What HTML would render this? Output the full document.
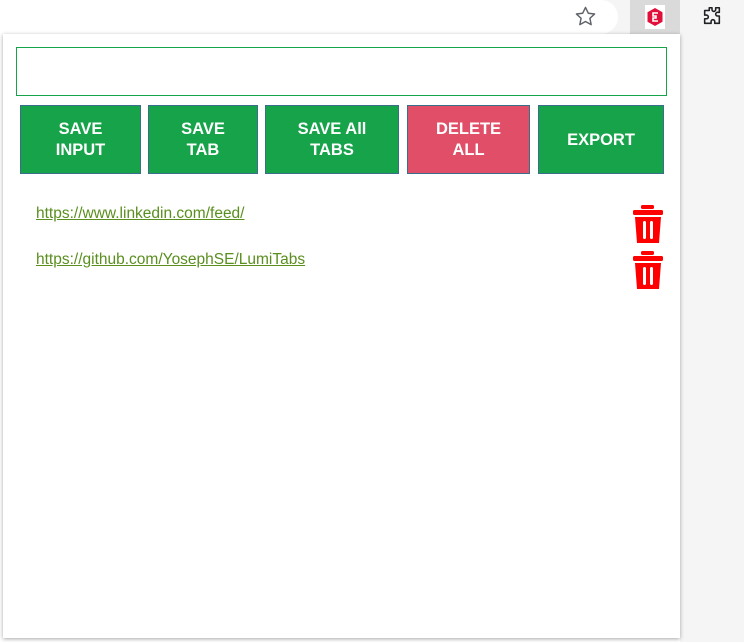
<!DOCTYPE html>
<html><head><meta charset="utf-8"><style>
*{margin:0;padding:0;box-sizing:border-box}
body{width:744px;height:642px;overflow:hidden;background:#fff;font-family:"Liberation Sans",Arial,sans-serif;position:relative}
.top{position:absolute;left:0;top:0;width:744px;height:34px;background:#f5f5f5}
.right{position:absolute;left:680px;top:34px;width:64px;height:608px;background:#f5f5f5}
.bar{position:absolute;left:0;top:0;width:618px;height:34px;background:#fff;border-radius:0 17px 17px 0}
.ext{position:absolute;left:630px;top:0;width:50px;height:34px;background:#dadada}
.popup{position:absolute;left:3px;top:34px;width:677px;height:604px;background:#fff;box-shadow:0 1px 4px rgba(0,0,0,.35)}
.inp{position:absolute;left:13px;top:13px;width:651px;height:49px;border:1px solid #16a34a}
.btn{position:absolute;top:71px;height:69px;background:#16a34a;border:1px solid #3a6e8a;color:#fff;font-weight:bold;font-size:16.5px;line-height:21px;display:flex;align-items:center;justify-content:center;text-align:center;padding-top:1px}
a{position:absolute;left:33px;color:#5a8f1f;font-size:15.5px;text-decoration:underline}
.tr{position:absolute;left:629px}
</style></head><body>
<div class="top"></div>
<div class="bar"></div>
<svg style="position:absolute;left:574px;top:5px" width="23" height="23" viewBox="0 0 24 24"><path d="M12 2.5l2.9 6.1 6.6.8-4.9 4.5 1.3 6.6L12 17.2l-5.9 3.3 1.3-6.6-4.9-4.5 6.6-.8z" fill="none" stroke="#5f6368" stroke-width="1.5" stroke-linejoin="round"/></svg>
<div class="ext"></div>
<svg style="position:absolute;left:645px;top:5px" width="20" height="24" viewBox="0 0 20 24"><rect width="20" height="24" fill="#fff"/><path d="M10 3l7.5 4.2v9.6L10 21l-7.5-4.2V7.2z" fill="#e0103a"/><path d="M13 8H8v3h3v2H8v3h5" fill="none" stroke="#fff" stroke-width="1.6"/></svg>
<svg style="position:absolute;left:701px;top:5px" width="22" height="22" viewBox="0 0 24 24"><path d="M9 3h3v2a2 2 0 0 0 4 0V3h0v0h4v5h-2a2 2 0 0 0 0 4h2v8h-5v-2a2 2 0 0 0-4 0v2H4v-5h2a2 2 0 0 0 0-4H4V6h5z" fill="none" stroke="#202124" stroke-width="1.7" stroke-linejoin="round"/></svg>
<div class="right"></div>
<div class="popup">
<div class="inp"></div>
<div class="btn" style="left:17px;width:121px">SAVE<br>INPUT</div>
<div class="btn" style="left:145px;width:110px">SAVE<br>TAB</div>
<div class="btn" style="left:262px;width:134px">SAVE All<br>TABS</div>
<div class="btn" style="left:404px;width:123px;background:#e04e67">DELETE<br>ALL</div>
<div class="btn" style="left:535px;width:126px">EXPORT</div>
<a style="top:171px">https://www.linkedin.com/feed/</a>
<a style="top:217px">https://github.com/YosephSE/LumiTabs</a>
<svg class="tr" style="top:171px" width="32" height="38" viewBox="0 0 32 38"><rect x="9" y="0" width="13" height="4" rx="1.5" fill="#f00"/><rect x="1" y="5" width="30" height="5" rx="1.5" fill="#f00"/><path d="M3 12h26l-2 26H5z" fill="#f00"/><rect x="11" y="16" width="3" height="18" rx="1.5" fill="#fff"/><rect x="18" y="16" width="3" height="18" rx="1.5" fill="#fff"/></svg>
<svg class="tr" style="top:217px" width="32" height="38" viewBox="0 0 32 38"><rect x="9" y="0" width="13" height="4" rx="1.5" fill="#f00"/><rect x="1" y="5" width="30" height="5" rx="1.5" fill="#f00"/><path d="M3 12h26l-2 26H5z" fill="#f00"/><rect x="11" y="16" width="3" height="18" rx="1.5" fill="#fff"/><rect x="18" y="16" width="3" height="18" rx="1.5" fill="#fff"/></svg>
</div>
</body></html>
